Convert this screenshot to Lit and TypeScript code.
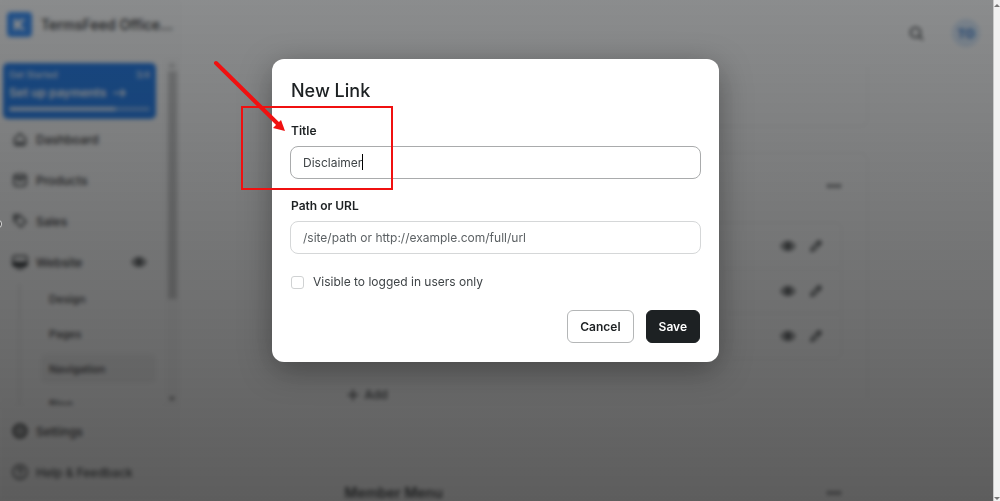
import { LitElement, html, css, svg } from "lit";
import { customElement, state } from "lit/decorators.js";

const icons = {
  home: svg`<path d="M2.5 7.5 8 2.5l5.500 5v4.500a2 2 0 0 1-2 2h-7a2 2 0 0 1-2-2z"/><path d="M5.500 14v-2.500h5V14"/>`,
  box: svg`<rect x="2" y="2.500" width="12" height="11.500" rx="3"/><path d="M2.500 6h11M6 6l2 3 2-3"/>`,
  tag: svg`<path d="M2 2h5.500l6.500 6.500-5 5.500L2 7.500z"/><circle cx="5" cy="5" r="1" fill="currentColor"/>`,
  screen: svg`<rect x="1" y="2" width="14" height="10" rx="2"/><path d="M1 8.500h14V10a2 2 0 0 1-2 2H3a2 2 0 0 1-2-2z" fill="currentColor"/><path d="M5 14.500h6"/>`,
  gear: svg`<circle cx="8" cy="8" r="6.500" stroke-dasharray="3.500 1.600" stroke-width="2"/><circle cx="8" cy="8" r="5.500"/><circle cx="8" cy="8" r="2"/>`,
  help: svg`<circle cx="8" cy="8" r="7"/><path d="M6 6.500a2 2 0 1 1 2.800 1.800c-.6.3-.8.700-.8 1.200M8 11.500v.5"/>`,
  eye: svg`<path d="M1.500 8S4 4 8 4s6.500 4 6.500 4-2.500 4-6.500 4S1.500 8 1.500 8z"/><circle cx="8" cy="8" r="2" fill="currentColor"/>`,
  pencil: svg`<path d="M3 13l.8-3L11 2.800l2.200 2.200L6 12.200zM9.500 4.500l2 2"/>`,
  search: svg`<circle cx="7.500" cy="7.500" r="5"/><path d="m11.500 11.500 3 3"/>`,
  dots: svg`<g fill="currentColor" stroke="none"><circle cx="3" cy="8" r="1.800"/><circle cx="8" cy="8" r="1.800"/><circle cx="13" cy="8" r="1.800"/></g>`,
  plus: svg`<path d="M8 3v10M3 8h10"/>`,
  arrow: svg`<path d="M2 8h11M9.500 4.500 13 8l-3.500 3.500"/>`,
};

type IconName = keyof typeof icons;

const icon = (name: IconName) => html`<svg class="icon" viewBox="0 0 16 16" aria-hidden="true">${icons[name]}</svg>`;

const base = css`
  * { box-sizing: border-box; }
  .icon {
    display: block;
    flex: none;
    width: 16px;
    height: 16px;
    fill: none;
    stroke: currentColor;
    stroke-width: 1.5;
    stroke-linecap: round;
    stroke-linejoin: round;
  }
  button { font: inherit; color: inherit; border: 0; background: none; padding: 0; cursor: pointer; }
  a { color: inherit; text-decoration: none; }
  h2, p, ul { margin: 0; padding: 0; list-style: none; }
`;

@customElement("side-bar")
class SideBar extends LitElement {
  static styles = [base, css`
    :host { display: flex; flex-direction: column; width: 180px; flex: none; background: #fcfcfc; border-right: 1px solid #f6f6f6; }
    .brand { display: flex; align-items: center; gap: 9px; height: 60px; padding: 0 7px 12px; font-size: 14px; font-weight: 500; white-space: nowrap; }
    .logo { width: 25px; height: 25px; border-radius: 4px; background: #2a86f5; color: #fff; padding: 6px; }
    .logo svg { display: block; width: 13px; height: 13px; fill: currentColor; }
    .scroller { display: flex; height: 346px; overflow: hidden; border-bottom: 1px solid #f0f0f0; }
    .menu { flex: 1; padding: 3px 9px 0 3px; min-width: 0; }
    .started { display: grid; grid-template-columns: 1fr auto; gap: 1px; height: 56px; padding: 6px; border-radius: 5px; background: #1474ea; color: #fff; font-size: 9px; line-height: 12px; }
    .next { grid-column: 1 / 3; display: flex; gap: 6px; font-size: 12px; font-weight: 600; line-height: 15px; }
    .track { grid-column: 1 / 3; align-self: end; height: 4px; margin-bottom: 2px; border-radius: 2px; background: #6ba9f3; }
    .bar { width: 76%; height: 4px; border-radius: 2px; background: #d5e6fb; }
    .item { display: flex; align-items: center; gap: 8px; height: 40px; margin-bottom: 1px; padding: 0 9px; font-size: 12px; font-weight: 500; }
    .eye { margin-left: auto; }
    .sub { margin: 2px 0 0 16px; padding-left: 21px; border-left: 1px solid #d4d4d4; font-size: 11px; font-weight: 500; }
    .sub a { display: flex; align-items: center; height: 29px; margin-bottom: 6px; padding: 0 8px; border-radius: 5px; }
    .sub .active { background: #f0f0f0; }
    .rail { display: flex; flex-direction: column; align-items: center; justify-content: space-between; width: 14px; padding: 3px 0 4px; background: #f7f7f7; }
    .thumb { flex: none; width: 9px; height: 228px; margin-bottom: auto; background: #c4c4c4; }
    .up, .down { border: 3px solid transparent; }
    .up { border-bottom: 4px solid #aaa; border-top: 0; margin-bottom: 4px; }
    .down { border-top: 4px solid #555; border-bottom: 0; }
    .foot { padding: 5px 3px; }
  `];

  render() {
    return html`
      <div class="brand">
        <span class="logo"><svg viewBox="0 0 13 13"><path d="M1 1h3v4l4-4h4L7 6.500 12 12H8L4 8v4H1z"/></svg></span>
        <span>TermsFeed Office...</span>
      </div>
      <div class="scroller">
        <nav class="menu">
          <a class="started" href="#">
            <span>Get Started</span><span>3/4</span>
            <span class="next">Set up payments ${icon("arrow")}</span>
            <span class="track"><div class="bar"></div></span>
          </a>
          <a class="item" href="#">${icon("home")} Dashboard</a>
          <a class="item" href="#">${icon("box")} Products</a>
          <a class="item" href="#">${icon("tag")} Sales</a>
          <a class="item" href="#">${icon("screen")} Website <span class="eye">${icon("eye")}</span></a>
          <div class="sub">
            <a href="#">Design</a>
            <a href="#">Pages</a>
            <a class="active" href="#">Navigation</a>
            <a href="#">Blog</a>
          </div>
        </nav>
        <div class="rail"><span class="up"></span><span class="thumb"></span><span class="down"></span></div>
      </div>
      <nav class="foot">
        <a class="item" href="#">${icon("gear")} Settings</a>
        <a class="item" href="#">${icon("help")} Help &amp; Feedback</a>
      </nav>
    `;
  }
}

@customElement("menu-page")
class MenuPage extends LitElement {
  static styles = [base, css`
    :host { display: block; flex: 1; min-width: 0; }
    .top { display: flex; justify-content: flex-end; align-items: center; gap: 28px; height: 66px; padding-right: 13px; }
    .avatar { display: grid; place-items: center; width: 28px; height: 28px; border-radius: 14px; background: #d9e9fa; color: #0b5cc0; font-size: 12px; font-weight: 600; }
    .cards { display: grid; gap: 25px; max-width: 562px; margin: 0 auto; padding-left: 13px; }
    .card { padding: 0 25px; border: 1px solid #f1f1f1; border-radius: 8px; }
    .first { height: 61px; border-top: 0; border-radius: 0 0 8px 8px; }
    .head { display: flex; align-items: center; justify-content: space-between; height: 71px; }
    .name { font-size: 14px; font-weight: 600; }
    .main .head { justify-content: flex-end; height: 69px; padding-bottom: 4px; }
    .rows { border: 1px solid #f1f1f1; border-radius: 6px; }
    .row { display: flex; align-items: center; justify-content: flex-end; gap: 12px; height: 45px; padding-right: 17px; }
    .row + .row { border-top: 1px solid #f1f1f1; }
    .add { display: flex; align-items: center; gap: 4px; height: 71px; font-size: 12px; font-weight: 500; }
  `];

  render() {
    return html`
      <header class="top">
        <button aria-label="Search">${icon("search")}</button>
        <button class="avatar">TO</button>
      </header>
      <div class="cards">
        <section class="card first"></section>
        <section class="card main">
          <div class="head"><button aria-label="More">${icon("dots")}</button></div>
          <ul class="rows">
            ${[1, 2, 3].map(() => html`<li class="row">
              <button aria-label="Preview">${icon("eye")}</button>
              <button aria-label="Edit">${icon("pencil")}</button>
            </li>`)}
          </ul>
          <button class="add">${icon("plus")} Add</button>
        </section>
        <section class="card">
          <div class="head"><h2 class="name">Member Menu</h2><button aria-label="More">${icon("dots")}</button></div>
        </section>
      </div>
    `;
  }
}

@customElement("link-dialog")
class LinkDialog extends LitElement {
  @state() private linkTitle = "Disclaimer";

  static styles = [base, css`
    :host { display: block; position: relative; width: 100%; max-width: 447px; }
    .panel { display: grid; gap: 20px; padding: 19px 18px; border-radius: 12px; background: #fff; color: #1d2123; box-shadow: 0 8px 32px rgba(0, 0, 0, 0.35); font-size: 12px; line-height: 16px; }
    .heading { padding-left: 1px; font-size: 18px; line-height: 25px; font-weight: 500; }
    .fields { display: grid; gap: 19px; }
    .field { display: grid; gap: 7px; position: relative; }
    .label { padding-left: 1px; font-weight: 600; }
    .input { width: 100%; height: 33px; padding: 0 12px; border: 1px solid #d5d7d8; border-radius: 8px; background: #fff; font: inherit; color: #3f4447; outline: none; }
    .input::placeholder { color: #5c6164; opacity: 1; }
    .current { border-color: #a9abac; }
    .caret { position: absolute; left: 72px; top: 31px; width: 1px; height: 16px; background: #000; }
    .check { display: flex; align-items: center; gap: 9px; padding-left: 1px; color: #3f4447; }
    .check input { appearance: none; width: 13px; height: 13px; margin: 0; border: 1px solid #d0d2d3; border-radius: 3px; background: #fff; }
    .actions { display: flex; justify-content: flex-end; gap: 12px; padding-right: 1px; font-weight: 600; }
    .cancel, .save { height: 33px; padding: 0 12px; border: 1px solid #b4b6b7; border-radius: 6px; }
    .save { border-color: #1d2123; background: #1d2123; color: #fff; }
    .frame { position: absolute; left: -31px; top: 47px; width: 152px; height: 84px; border: 2px solid #f01010; pointer-events: none; }
    .pointer { position: absolute; left: -62px; top: 0; width: 80px; height: 80px; pointer-events: none; }
  `];

  render() {
    return html`
      <form class="panel" role="dialog" aria-labelledby="heading" @submit=${(e: Event) => e.preventDefault()}>
        <h2 class="heading" id="heading">New Link</h2>
        <div class="fields">
          <div class="field">
            <label class="label" for="title">Title</label>
            <input class="input current" id="title" type="text" .value=${this.linkTitle}
              @input=${(e: Event) => (this.linkTitle = (e.target as HTMLInputElement).value)} />
            <span class="caret"></span>
          </div>
          <div class="field">
            <label class="label" for="path">Path or URL</label>
            <input class="input" id="path" type="text" placeholder="/site/path or http://example.com/full/url" />
          </div>
        </div>
        <label class="check"><input type="checkbox" /> Visible to logged in users only</label>
        <div class="actions">
          <button class="cancel" type="button">Cancel</button>
          <button class="save" type="submit">Save</button>
        </div>
      </form>
      <div class="frame"></div>
      <svg class="pointer" viewBox="0 0 80 80" aria-hidden="true">
        <path d="M6 4 68 65" stroke="#f01010" stroke-width="4" stroke-linecap="round" />
        <path d="M75 72 71 61 63 69z" fill="#f01010" />
      </svg>
    `;
  }
}

@customElement("app-root")
class AppRoot extends LitElement {
  static styles = [base, css`
    :host { display: flex; height: 100vh; overflow: hidden; font-family: Inter, "Liberation Sans", sans-serif; color: #1d2123; background: #fff; }
    .stage { display: grid; grid-template: minmax(0, 1fr) / minmax(0, 1fr); flex: 1; min-width: 0; overflow: hidden; position: relative; background: #fff; }
    .page, .shade { grid-area: 1 / 1; min-height: 0; }
    .page { display: flex; filter: blur(2px); background: #fff; }
    .shade { display: flex; justify-content: center; align-items: flex-start; padding: 59px 2px 0 0; background: linear-gradient(rgba(27, 30, 32, 0.51), rgba(27, 27, 27, 0.71)); z-index: 1; }
    .cursor { position: absolute; left: -5px; top: 219px; width: 8px; height: 10px; z-index: 2; }
    .scrollbar { display: flex; flex-direction: column; justify-content: space-between; align-items: center; width: 7px; padding: 4px 0 1px; background: #f1f1f1; border-left: 1px solid #c8c8c8; }
    .up, .down { border: 3px solid transparent; }
    .up { border-top: 0; border-bottom-color: #777; }
    .down { border-bottom: 0; border-top-color: #777; }
  `];

  render() {
    return html`
      <div class="stage">
        <div class="page">
          <side-bar></side-bar>
          <menu-page></menu-page>
        </div>
        <div class="shade"><link-dialog></link-dialog></div>
        <svg class="cursor" viewBox="0 0 8 10" aria-hidden="true"><ellipse cx="4" cy="5" rx="2.500" ry="3.500" fill="#444" stroke="#ddd" /></svg>
      </div>
      <div class="scrollbar"><span class="up"></span><span class="down"></span></div>
    `;
  }
}
